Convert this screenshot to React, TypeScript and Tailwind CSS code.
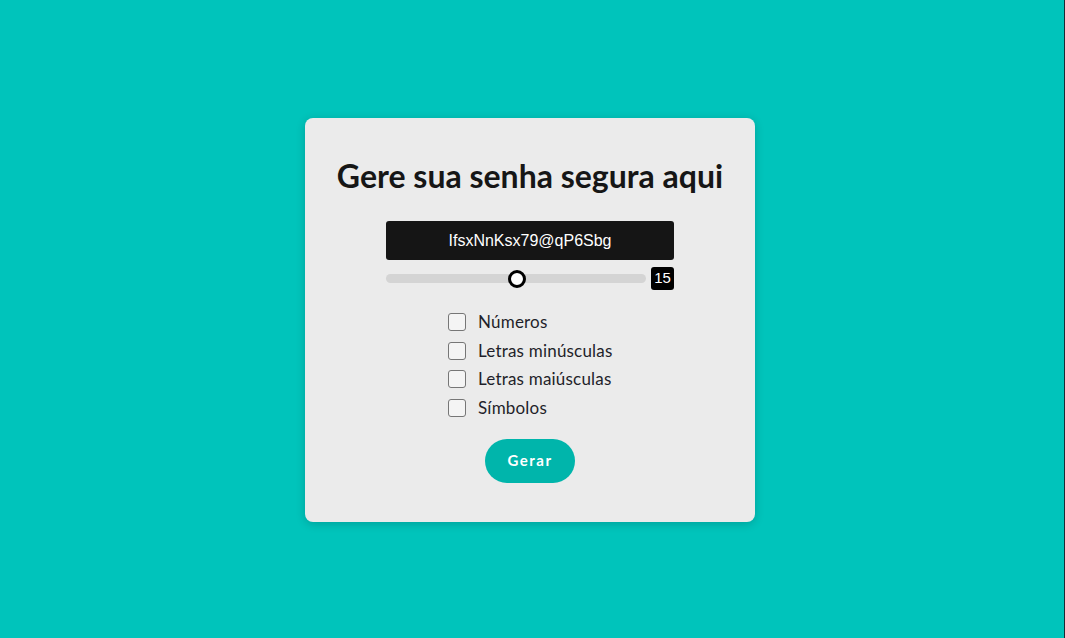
import { useState } from 'react'

const options = ['Números', 'Letras minúsculas', 'Letras maiúsculas', 'Símbolos']

export default function App() {
  const [length, setLength] = useState(15)
  const [checked, setChecked] = useState<boolean[]>([false, false, false, false])

  const pct = ((length - 1) / (29 - 1)) * 100

  return (
    <div
      className="flex h-[638px] w-full items-center justify-center border-r border-[#1c2b33] bg-[#00c4bb] pr-[4px] pt-[2px]"
      style={{ fontFamily: 'Lato, "Noto Sans", sans-serif' }}
    >
      <div className="flex h-[404px] w-[450px] flex-col items-center rounded-lg bg-[#ebebeb] pt-[38px] shadow-[0_2px_10px_rgba(0,0,0,0.18)]">
        <h1 className="text-[32px] font-bold leading-[40px] text-[#161616]">
          Gere sua senha segura aqui
        </h1>

        <div className="mt-[25px] flex h-[39px] w-[288px] items-center justify-center rounded-[3px] bg-[#151515]">
          <span className="text-[16px] text-white" style={{ fontFamily: '"Liberation Sans", Arial, sans-serif' }}>
            IfsxNnKsx79@qP6Sbg
          </span>
        </div>

        <div className="mt-[7px] flex w-[288px] items-center justify-between">
          <div className="relative h-[23px] w-[260px]">
            <div className="absolute left-0 right-0 top-[7px] h-[9px] rounded-full bg-[#d4d4d4]" />
            <div
              className="absolute top-[3px] h-[18px] w-[18px] -translate-x-1/2 rounded-full border-[3px] border-black bg-white"
              style={{ left: `${10 + (pct / 100) * 242}px` }}
            />
            <input
              type="range"
              min={1}
              max={29}
              value={length}
              onChange={(e) => setLength(Number(e.target.value))}
              className="absolute inset-0 h-full w-full cursor-pointer opacity-0"
            />
          </div>
          <div
            className="flex h-[23px] w-[23px] items-center justify-center rounded-[3px] bg-black text-[15px] text-white"
            style={{ fontFamily: '"Liberation Sans", Arial, sans-serif' }}
          >
            {length}
          </div>
        </div>

        <div className="mt-[23px] flex w-[170px] flex-col gap-[10.5px] pl-[3px]">
          {options.map((opt, i) => (
            <label key={opt} className="flex cursor-pointer items-center gap-[12px]">
              <span
                className={`h-[18px] w-[18px] shrink-0 rounded-[3px] border border-[#767676] ${checked[i] ? 'bg-[#00b5ab]' : 'bg-[#f4f4f4]'}`}
                onClick={() => setChecked(checked.map((c, j) => (j === i ? !c : c)))}
              />
              <span className="whitespace-nowrap text-[17px] leading-[18px] tracking-[0.2px] text-[#1f1f2a]">{opt}</span>
            </label>
          ))}
        </div>

        <button className="mt-[22px] h-[44px] w-[90px] rounded-[22px] bg-[#00b5ab] text-[15px] font-bold tracking-[1.5px] text-white">
          Gerar
        </button>
      </div>
    </div>
  )
}
